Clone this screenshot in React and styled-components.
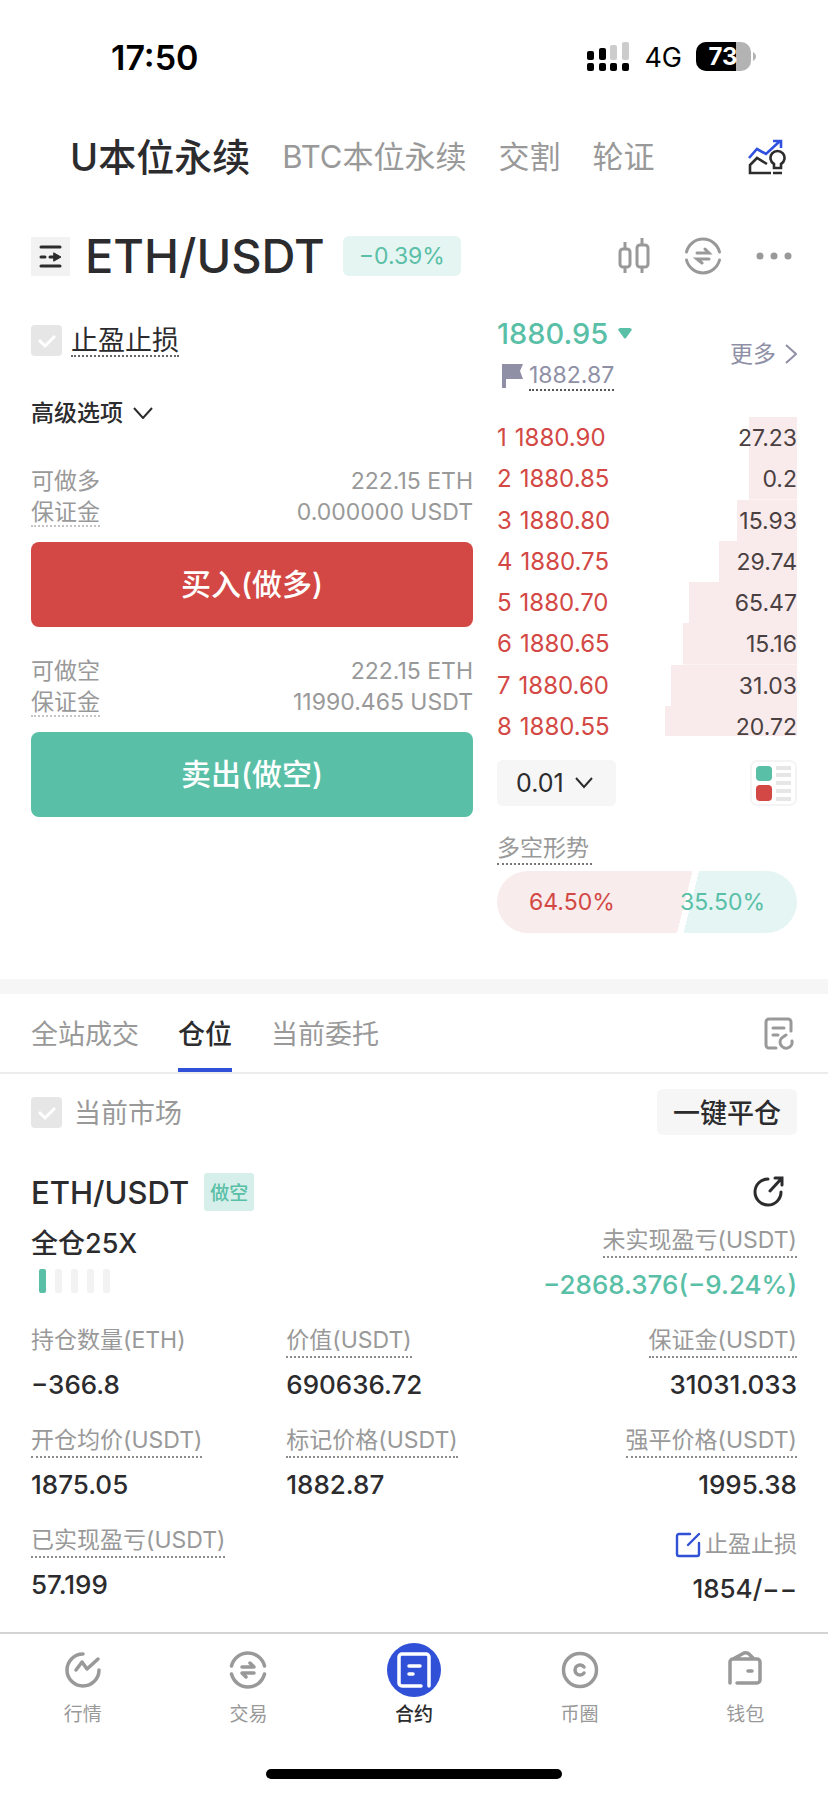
import React, { useState } from 'react';
import styled, { createGlobalStyle, css } from 'styled-components';

const GlobalStyle = createGlobalStyle`
  * {
    box-sizing: border-box;
  }
  body {
    margin: 0;
    background: #fff;
    color: #2c2c2e;
    font-family: Inter, 'Noto Sans CJK SC', sans-serif;
    font-size: 23px;
  }
  button, select, input {
    font: inherit;
    color: inherit;
    margin: 0;
    padding: 0;
    border: 0;
    background: none;
  }
  h1, h2, p, ul, ol, dl, dd {
    margin: 0;
    padding: 0;
    font-weight: 400;
  }
  a {
    color: inherit;
    text-decoration: none;
  }
  svg {
    display: block;
    flex: none;
  }
`;

const StatusBar = styled.div`
  display: flex;
  align-items: center;
  justify-content: space-between;
  height: 114px;
  padding: 0 72px 0 111px;
  color: #000;
`;

const Clock = styled.time`
  font-size: 34px;
  font-weight: 600;
`;

const StatusRight = styled.div`
  display: flex;
  align-items: center;
  gap: 14px;
  font-size: 27px;
`;

const MarketNav = styled.nav`
  display: flex;
  align-items: center;
  gap: 32px;
  height: 86px;
  padding: 0 42px 0 70px;
`;

const MarketLink = styled.a`
  font-size: ${(p) => (p.$active ? 38 : 31)}px;
  font-weight: ${(p) => (p.$active ? 500 : 400)};
  line-height: 50px;
  color: ${(p) => (p.$active ? '#2c2c2e' : '#999')};
  white-space: nowrap;
`;

const IconButton = styled.button`
  display: flex;
  align-items: center;
  margin-left: ${(p) => (p.$push ? 'auto' : 0)};
  color: ${(p) => p.$color || '#999'};
  cursor: pointer;
`;

const SymbolBar = styled.header`
  display: flex;
  align-items: center;
  height: 112px;
  padding: 0 36px 0 31px;
`;

const SymbolName = styled.h1`
  margin-left: 15px;
  font-size: 47px;
  font-weight: 500;
  line-height: 56px;
`;

const Change = styled.span`
  margin-left: 18px;
  padding: 0 16px;
  border-radius: 6px;
  background: #e5f5f2;
  color: #5abfa7;
  font-size: 23px;
  line-height: 40px;
`;

const SymbolTools = styled.div`
  display: flex;
  align-items: center;
  gap: 34px;
  margin-left: auto;
`;

const Trade = styled.section`
  display: grid;
  grid-template-columns: 442fr 300fr;
  gap: 24px;
  padding: 0 31px 46px;
`;

const Form = styled.form`
  padding-top: 11px;
`;

const CheckLabel = styled.label`
  display: flex;
  align-items: center;
  gap: ${(p) => p.$gap || 9}px;
  font-size: 27px;
  color: ${(p) => p.$color || '#2c2c2e'};
`;

const CheckBox = styled.input`
  appearance: none;
  width: 31px;
  height: 31px;
  border-radius: 4px;
  background: #e6e6e6 url("data:image/svg+xml,%3Csvg xmlns='http://www.w3.org/2000/svg' viewBox='0 0 31 31' fill='none' stroke='white' stroke-width='3'%3E%3Cpath d='M8 15l6 6 10-10'/%3E%3C/svg%3E");
`;

const CheckText = styled.span`
  padding-top: 4px;
  line-height: 28px;
  ${(p) => p.$dotted && css`border-bottom: 2px dotted #666;`}
`;

const Advanced = styled.button`
  display: flex;
  align-items: center;
  gap: 10px;
  margin: 37px 0 34px;
  line-height: 38px;
  font-weight: 500;
  cursor: pointer;
`;

const Side = styled.div`
  margin-bottom: 29px;
`;

const InfoLine = styled.div`
  display: flex;
  justify-content: space-between;
  height: 31px;
  line-height: 31px;
  color: #999;
`;

const InfoName = styled.span`
  height: 30px;
  ${(p) => p.$dotted && css`border-bottom: 2px dotted #c4c4c4;`}
`;

const OrderButton = styled.button`
  width: 100%;
  margin-top: 14px;
  border-radius: 8px;
  background: ${(p) => p.$color};
  color: #fff;
  font-size: 30px;
  font-weight: 500;
  line-height: 85px;
  cursor: pointer;
`;

const PriceHead = styled.div`
  display: flex;
  justify-content: space-between;
  align-items: center;
  height: 83px;
`;

const LastPrice = styled.div`
  display: flex;
  align-items: center;
  gap: 10px;
  color: #5abfa7;
  font-size: 29px;
  font-weight: 500;
  line-height: 44px;
`;

const MarkPrice = styled.div`
  display: flex;
  align-items: center;
  gap: 5px;
  height: 40px;
  padding-left: 5px;
  color: #8f90a6;
`;

const MarkValue = styled.span`
  padding-top: 2px;
  border-bottom: 2px dotted #555;
  line-height: 27px;
`;

const More = styled.a`
  display: flex;
  align-items: center;
  gap: 9px;
  line-height: 30px;
  color: #8f90a6;
`;

const BookRows = styled.ol`
  display: grid;
  grid-template-rows: repeat(7, 1fr) 30px;
  height: 319px;
  margin-top: 22px;
  list-style: none;
`;

const BookRow = styled.li`
  display: flex;
  justify-content: space-between;
  align-items: flex-start;
  padding-top: 7px;
  background: linear-gradient(#f9ebeb, #f9ebeb) right / ${(p) => p.$depth}% 100% no-repeat;
  line-height: 28px;
`;

const Ask = styled.span`
  display: flex;
  gap: 8px;
  color: #d34844;
  font-size: 24px;
`;

const Amount = styled.span`
  color: #4a4041;
`;

const BookTools = styled.div`
  display: flex;
  justify-content: space-between;
  margin-top: 24px;
`;

const StepSelect = styled.select`
  appearance: none;
  width: 119px;
  height: 46px;
  padding-left: 19px;
  border-radius: 6px;
  background: #f6f6f6 url("data:image/svg+xml,%3Csvg xmlns='http://www.w3.org/2000/svg' viewBox='0 0 18 12' fill='none' stroke='%232c2c2e' stroke-width='2'%3E%3Cpath d='M1 1l8 9 8-9'/%3E%3C/svg%3E") 78px 17px / 18px 12px no-repeat;
  font-size: 25px;
`;

const Trend = styled.p`
  margin: 27px 0 6px;
  color: #999;
  line-height: 30px;
`;

const TrendName = styled.span`
  display: inline-block;
  padding-right: 3px;
  border-bottom: 2px dotted #777;
`;

const Ratio = styled.div`
  display: flex;
  align-items: center;
  justify-content: space-between;
  height: 62px;
  padding: 0 32px;
  border-radius: 31px;
  background: linear-gradient(104deg, #f8ecec 62%, #fff 62%, #fff 64%, #e4f5f3 64%);
`;

const Percent = styled.span`
  color: ${(p) => p.$color};
`;

const Band = styled.div`
  height: 15px;
  background: #f6f6f6;
`;

const Tabs = styled.div`
  display: flex;
  align-items: stretch;
  gap: 39px;
  height: 80px;
  padding: 0 34px 0 31px;
  border-bottom: 2px solid #ececec;
`;

const Tab = styled.button`
  padding-top: 2px;
  border-bottom: 4px solid ${(p) => (p.$active ? '#3050d8' : 'transparent')};
  color: ${(p) => (p.$active ? '#2c2c2e' : '#999')};
  font-size: 27px;
  font-weight: ${(p) => (p.$active ? 500 : 400)};
  cursor: pointer;
`;

const FilterBar = styled.div`
  display: flex;
  justify-content: space-between;
  align-items: center;
  height: 76px;
  padding: 0 31px;
`;

const CloseAll = styled.button`
  padding: 3px 16px 0;
  border-radius: 6px;
  background: #f6f6f6;
  font-size: 27px;
  font-weight: 500;
  line-height: 43px;
  cursor: pointer;
`;

const Position = styled.article`
  padding: 15px 31px 13px;
`;

const PositionHead = styled.div`
  display: flex;
  align-items: center;
  height: 54px;
  padding-right: 13px;
`;

const PositionName = styled.h2`
  font-size: 31px;
  font-weight: 500;
`;

const SideBadge = styled.span`
  margin-left: 15px;
  padding: 3px 6px 0;
  border-radius: 3px;
  background: #d7efea;
  color: #5abfa7;
  font-size: 19px;
  font-weight: 500;
  line-height: 35px;
`;

const Summary = styled.div`
  display: flex;
  justify-content: space-between;
  height: 100px;
`;

const Leverage = styled.p`
  font-size: 27px;
  font-weight: 500;
  line-height: 50px;
`;

const Risk = styled.div`
  display: flex;
  gap: 9px;
  padding-left: 8px;
`;

const RiskBar = styled.span`
  width: 7px;
  height: 24px;
  border-radius: 2px;
  background: ${(p) => (p.$on ? '#5abfa7' : '#f2f2f2')};
`;

const Stats = styled.dl`
  display: grid;
  grid-template-columns: repeat(3, 1fr);
`;

const Stat = styled.div`
  display: flex;
  flex-direction: column;
  grid-column-end: ${(p) => (p.$end ? 4 : 'auto')};
  align-items: ${(p) => (p.$end ? 'flex-end' : 'flex-start')};
  height: 100px;
  padding-top: 4px;
`;

const StatName = styled.dt`
  display: flex;
  align-items: center;
  gap: 4px;
  height: 35px;
  padding-top: 2px;
  line-height: 31px;
  color: #999;
  border-bottom: 2px dotted ${(p) => (p.$dotted ? '#8c8c8c' : 'transparent')};
`;

const StatValue = styled.dd`
  color: ${(p) => p.$color || '#2c2c2e'};
  font-size: 26px;
  font-weight: 500;
  line-height: 54px;
`;

const StopStat = styled(Stat)`
  padding-top: 8px;
`;

const TabBar = styled.nav`
  display: grid;
  grid-template-columns: repeat(5, 1fr);
  height: 137px;
  border-top: 2px solid #d4d4d6;
`;

const TabLink = styled.a`
  display: flex;
  flex-direction: column;
  align-items: center;
  padding-top: 8px;
  color: ${(p) => (p.$active ? '#2c2c2e' : '#999')};
  font-size: 19px;
  font-weight: ${(p) => (p.$active ? 500 : 400)};
  line-height: 34px;
`;

const HomeBar = styled.div`
  width: 296px;
  height: 10px;
  margin: 0 auto 14px;
  border-radius: 5px;
  background: #000;
`;

const Signal = () => (
  <svg width="43" height="30" viewBox="0 0 43 30">
    <g fill="#000">
      <rect x="0" y="9" width="7" height="9" rx="2" />
      <rect x="12" y="6" width="7" height="12" rx="2" />
      <rect x="0" y="21" width="7" height="8" rx="2" />
      <rect x="12" y="21" width="7" height="8" rx="2" />
      <rect x="23" y="21" width="7" height="8" rx="2" />
      <rect x="35" y="21" width="7" height="8" rx="2" />
    </g>
    <rect x="23" y="3" width="7" height="15" rx="2" fill="#ccc" />
    <rect x="35" y="0" width="7" height="18" rx="2" fill="#ccc" />
  </svg>
);

const Battery = () => (
  <svg width="60" height="30" viewBox="0 0 60 30">
    <rect width="55" height="29" rx="10" fill="#b3b3b3" />
    <path d="M10 0h30v29H10A10 10 0 0 1 0 19v-9A10 10 0 0 1 10 0z" fill="#000" />
    <path d="M57 10c4 2 4 7 0 9z" fill="#b3b3b3" />
    <text x="27" y="23" textAnchor="middle" fontSize="24" fontWeight="700" fill="#fff">73</text>
  </svg>
);

const InsightIcon = () => (
  <svg width="38" height="36" viewBox="0 0 38 36" fill="none" strokeWidth="2.6">
    <path d="M1 19L9 10l9 5L32 2M25 2h8v7" stroke="#3050e0" />
    <g stroke="#2c2c2e">
      <path d="M23 34H2v-8l7-7 10 6M25 34h9" />
      <path d="M26 29v-4a7 7 0 1 1 7 0v4z" />
    </g>
  </svg>
);

const ListIcon = () => (
  <svg width="39" height="39" viewBox="0 0 39 39" fill="none" stroke="#2c2c2e" strokeWidth="3" strokeLinecap="round">
    <rect width="39" height="39" fill="#f2f2f2" stroke="none" />
    <path d="M10 10h19M10 20h4M19 20h4M10 29h19" />
    <path d="M23 16l7 4-7 4z" fill="#2c2c2e" strokeWidth="1" />
  </svg>
);

const CandleIcon = () => (
  <svg width="32" height="36" viewBox="0 0 32 36" fill="none" stroke="currentColor" strokeWidth="3">
    <rect x="2" y="11" width="10" height="18" rx="3" />
    <rect x="19" y="7" width="11" height="22" rx="3" />
    <path d="M7 4v7M7 29v6M24 0v7M24 29v6" />
  </svg>
);

const SwapIcon = () => (
  <svg width="38" height="38" viewBox="0 0 38 38" fill="none" stroke="currentColor" strokeWidth="3" strokeLinecap="round">
    <path d="M2.5 15a17 17 0 0 1 33 0M2.5 23a17 17 0 0 0 33 0" />
    <path d="M13 16h12l-4-4M25 22H13l5 4" />
  </svg>
);

const DotsIcon = () => (
  <svg width="36" height="8" viewBox="0 0 36 8" fill="currentColor">
    <circle cx="4" cy="4" r="3.5" />
    <circle cx="18" cy="4" r="3.5" />
    <circle cx="32" cy="4" r="3.5" />
  </svg>
);

const Chevron = ({ right }) => (
  <svg width={right ? 12 : 20} height={right ? 20 : 12} viewBox={right ? '0 0 12 20' : '0 0 20 12'} fill="none" stroke="currentColor" strokeWidth="2">
    <path d={right ? 'M1 1l10 9-10 9' : 'M1 1l9 10 9-10'} />
  </svg>
);

const FlagIcon = () => (
  <svg width="22" height="24" viewBox="0 0 22 24" fill="currentColor">
    <path d="M0 0h21l-3 7 3 8H4v9H0z" />
  </svg>
);

const BookModeIcon = () => (
  <svg width="47" height="46" viewBox="0 0 47 46">
    <rect x="1" y="1" width="45" height="44" rx="6" fill="#fff" stroke="#f4f4f4" strokeWidth="2" />
    <rect x="6" y="6" width="16" height="15" rx="4" fill="#5abfa7" />
    <rect x="6" y="25" width="16" height="16" rx="4" fill="#d34844" />
    <path d="M26 8h15M26 15h15M26 23h15M26 31h15M26 39h15" stroke="#e6e6e6" strokeWidth="4" />
  </svg>
);

const HistoryIcon = () => (
  <svg width="30" height="33" viewBox="0 0 30 33" fill="none" stroke="currentColor" strokeWidth="3" strokeLinecap="round">
    <path d="M12 31H5a3 3 0 0 1-3-3V5a3 3 0 0 1 3-3h19a3 3 0 0 1 3 3v9M9 11h11M9 18h5" />
    <path d="M28 24a6 6 0 1 1-9-4l3-2" />
  </svg>
);

const ShareIcon = () => (
  <svg width="31" height="32" viewBox="0 0 31 32" fill="none" stroke="currentColor" strokeWidth="3" strokeLinecap="round">
    <path d="M15 3A13 13 0 1 0 28 16M17 15L28 3M22 2h7v7" />
  </svg>
);

const EditIcon = () => (
  <svg width="26" height="26" viewBox="0 0 26 26" fill="none" stroke="#3050d8" strokeWidth="2.4" strokeLinecap="round">
    <path d="M15 2H4a2 2 0 0 0-2 2v18a2 2 0 0 0 2 2h18a2 2 0 0 0 2-2V11M13 13L24 2" />
  </svg>
);

const NavIcon = ({ name }) => (
  <svg width="56" height="56" viewBox="0 0 56 56" fill="none" stroke="currentColor" strokeWidth="3.5" strokeLinecap="round" strokeLinejoin="round">
    {name === 'quote' && <path d="M28 12a16 16 0 1 0 16 16M21 28l6-8 5 7 11-10" />}
    {name === 'swap' && <path d="M11.5 24a17 17 0 0 1 33 0M11.5 32a17 17 0 0 0 33 0M22 25h12l-4-4M34 31H22l4 4" />}
    {name === 'contract' && (
      <g stroke="#fff">
        <circle cx="28" cy="28" r="27" fill="#3050d8" stroke="none" />
        <path d="M35 44H16a3 3 0 0 1-3-3V15a3 3 0 0 1 3-3h24a3 3 0 0 1 3 3v29M23 24h11M23 32h4" />
      </g>
    )}
    {name === 'coin' && (
      <g>
        <circle cx="28" cy="28" r="16.5" />
        <path d="M32 25a5 5 0 1 0 0 6" />
      </g>
    )}
    {name === 'wallet' && <path d="M13 41V20a3 3 0 0 1 3-3h24a3 3 0 0 1 3 3v18a3 3 0 0 1-3 3H20M16 17l11-6q3-1 5 1l5 5M31 29h4" />}
  </svg>
);

const markets = ['U本位永续', 'BTC本位永续', '交割', '轮证'];

const asks = [
  { price: '1880.90', amount: '27.23', depth: 16 },
  { price: '1880.85', amount: '0.2', depth: 16 },
  { price: '1880.80', amount: '15.93', depth: 20 },
  { price: '1880.75', amount: '29.74', depth: 26 },
  { price: '1880.70', amount: '65.47', depth: 36 },
  { price: '1880.65', amount: '15.16', depth: 38 },
  { price: '1880.60', amount: '31.03', depth: 42 },
  { price: '1880.55', amount: '20.72', depth: 44 },
];

const sides = [
  { name: '可做多', size: '222.15 ETH', margin: '0.000000 USDT', action: '买入(做多)', color: '#d34844' },
  { name: '可做空', size: '222.15 ETH', margin: '11990.465 USDT', action: '卖出(做空)', color: '#5abfa7' },
];

const stats = [
  { name: '持仓数量(ETH)', value: '−366.8', plain: true },
  { name: '价值(USDT)', value: '690636.72' },
  { name: '保证金(USDT)', value: '31031.033', end: true },
  { name: '开仓均价(USDT)', value: '1875.05' },
  { name: '标记价格(USDT)', value: '1882.87' },
  { name: '强平价格(USDT)', value: '1995.38', end: true },
  { name: '已实现盈亏(USDT)', value: '57.199' },
];

const pages = [
  { icon: 'quote', name: '行情' },
  { icon: 'swap', name: '交易' },
  { icon: 'contract', name: '合约' },
  { icon: 'coin', name: '币圈' },
  { icon: 'wallet', name: '钱包' },
];

function OrderForm() {
  return (
    <Form onSubmit={(e) => e.preventDefault()}>
      <CheckLabel>
        <CheckBox type="checkbox" />
        <CheckText $dotted>止盈止损</CheckText>
      </CheckLabel>
      <Advanced type="button">高级选项<Chevron /></Advanced>
      {sides.map((side) => (
        <Side key={side.name}>
          <InfoLine><InfoName>{side.name}</InfoName><span>{side.size}</span></InfoLine>
          <InfoLine><InfoName $dotted>保证金</InfoName><span>{side.margin}</span></InfoLine>
          <OrderButton $color={side.color}>{side.action}</OrderButton>
        </Side>
      ))}
    </Form>
  );
}

function OrderBook() {
  return (
    <div>
      <PriceHead>
        <div>
          <LastPrice>
            1880.95
            <svg width="14" height="11" viewBox="0 0 14 11" fill="currentColor"><path d="M2 0h10q3 1 1 3L8 10q-1 1-2 0L1 3q-2-2 1-3z" /></svg>
          </LastPrice>
          <MarkPrice><FlagIcon /><MarkValue>1882.87</MarkValue></MarkPrice>
        </div>
        <More href="#more">更多<Chevron right /></More>
      </PriceHead>
      <BookRows>
        {asks.map((ask, i) => (
          <BookRow key={ask.price} $depth={ask.depth}>
            <Ask><span>{i + 1}</span><span>{ask.price}</span></Ask>
            <Amount>{ask.amount}</Amount>
          </BookRow>
        ))}
      </BookRows>
      <BookTools>
        <StepSelect aria-label="深度"><option>0.01</option></StepSelect>
        <IconButton aria-label="盘口"><BookModeIcon /></IconButton>
      </BookTools>
      <Trend><TrendName>多空形势</TrendName></Trend>
      <Ratio>
        <Percent $color="#d34844">64.50%</Percent>
        <Percent $color="#5abfa7">35.50%</Percent>
      </Ratio>
    </div>
  );
}

function App() {
  const [tab, setTab] = useState('仓位');

  return (
    <>
      <GlobalStyle />
      <StatusBar>
        <Clock>17:50</Clock>
        <StatusRight><Signal />4G<Battery /></StatusRight>
      </StatusBar>
      <MarketNav>
        {markets.map((name, i) => (
          <MarketLink key={name} href="#market" $active={i === 0}>{name}</MarketLink>
        ))}
        <IconButton $push aria-label="分析"><InsightIcon /></IconButton>
      </MarketNav>
      <SymbolBar>
        <IconButton aria-label="列表"><ListIcon /></IconButton>
        <SymbolName>ETH/USDT</SymbolName>
        <Change>−0.39%</Change>
        <SymbolTools>
          <IconButton aria-label="K线"><CandleIcon /></IconButton>
          <IconButton aria-label="划转"><SwapIcon /></IconButton>
          <IconButton aria-label="设置"><DotsIcon /></IconButton>
        </SymbolTools>
      </SymbolBar>
      <Trade>
        <OrderForm />
        <OrderBook />
      </Trade>
      <Band />
      <Tabs>
        {['全站成交', '仓位', '当前委托'].map((name) => (
          <Tab key={name} $active={tab === name} onClick={() => setTab(name)}>{name}</Tab>
        ))}
        <IconButton $push aria-label="历史"><HistoryIcon /></IconButton>
      </Tabs>
      <FilterBar>
        <CheckLabel $gap={12} $color="#999">
          <CheckBox type="checkbox" />
          <CheckText>当前市场</CheckText>
        </CheckLabel>
        <CloseAll>一键平仓</CloseAll>
      </FilterBar>
      <Position>
        <PositionHead>
          <PositionName>ETH/USDT</PositionName>
          <SideBadge>做空</SideBadge>
          <IconButton $push $color="#2c2c2e" aria-label="分享"><ShareIcon /></IconButton>
        </PositionHead>
        <Summary>
          <div>
            <Leverage>全仓25X</Leverage>
            <Risk>
              {[1, 2, 3, 4, 5].map((level) => <RiskBar key={level} $on={level === 1} />)}
            </Risk>
          </div>
          <Stat as="dl" $end>
            <StatName $dotted>未实现盈亏(USDT)</StatName>
            <StatValue $color="#5abfa7">−2868.376(−9.24%)</StatValue>
          </Stat>
        </Summary>
        <Stats>
          {stats.map((stat) => (
            <Stat key={stat.name} $end={stat.end}>
              <StatName $dotted={!stat.plain}>{stat.name}</StatName>
              <StatValue>{stat.value}</StatValue>
            </Stat>
          ))}
          <StopStat $end>
            <StatName><EditIcon />止盈止损</StatName>
            <StatValue>1854/−−</StatValue>
          </StopStat>
        </Stats>
      </Position>
      <TabBar>
        {pages.map((page) => (
          <TabLink key={page.name} href={`#${page.icon}`} $active={page.icon === 'contract'}>
            <NavIcon name={page.icon} />
            {page.name}
          </TabLink>
        ))}
      </TabBar>
      <HomeBar />
    </>
  );
}

export default App;
